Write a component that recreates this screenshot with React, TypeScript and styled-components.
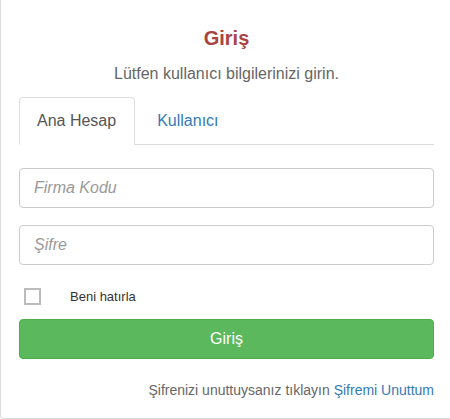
import { useState } from "react"
import styled, { createGlobalStyle } from "styled-components"

const GlobalStyle = createGlobalStyle`
  html, body {
    margin: 0;
    padding: 0;
    background: #fff;
    overflow: hidden;
  }
  body {
    font-family: "Liberation Sans", Arial, sans-serif;
    color: #333;
  }
`

const Panel = styled.div`
  box-sizing: border-box;
  width: 453px;
  height: 419px;
  border: 1px solid #ddd;
  border-top: none;
  border-radius: 0 0 4px 4px;
  padding: 26px 18px 0 18px;
  background: #fff;
`

const Title = styled.h3`
  margin: 0;
  font-size: 20px;
  line-height: 24px;
  font-weight: 700;
  color: #a94442;
  text-align: center;
`

const Lead = styled.p`
  margin: 13px 0 0;
  font-size: 16px;
  line-height: 22px;
  color: #666;
  text-align: center;
`

const Tabs = styled.ul`
  display: flex;
  margin: 12px 0 0;
  padding: 0;
  list-style: none;
  border-bottom: 1px solid #ddd;
`

const Tab = styled.li<{ $active?: boolean }>`
  margin: 0 4px ${p => (p.$active ? "-1px" : "0")} 0;
  padding: 12px 18px 12px 17px;
  font-size: 16px;
  line-height: 22px;
  border: 1px solid ${p => (p.$active ? "#ddd" : "transparent")};
  border-bottom: ${p => (p.$active ? "1px solid #fff" : "none")};
  border-radius: 4px 4px 0 0;
  background: ${p => (p.$active ? "#fff" : "transparent")};
  color: ${p => (p.$active ? "#555" : "#337ab7")};
  cursor: pointer;
`

const Form = styled.form`
  display: flex;
  flex-direction: column;
  margin-top: 23px;
`

const Input = styled.input<{ $gap?: number }>`
  box-sizing: border-box;
  height: 40px;
  margin-top: ${p => p.$gap ?? 0}px;
  padding: 0 14px;
  border: 1px solid #ccc;
  border-radius: 4px;
  font-family: "Liberation Sans", Arial, sans-serif;
  font-size: 16px;
  color: #555;
  outline: none;
  &::placeholder {
    color: #999;
    font-style: italic;
  }
`

const Remember = styled.label`
  display: flex;
  align-items: center;
  height: 20px;
  margin-top: 21px;
  padding-left: 5px;
  font-size: 13px;
  color: #333;
  cursor: pointer;
`

const Box = styled.span<{ $checked: boolean }>`
  box-sizing: border-box;
  width: 17px;
  height: 17px;
  margin-right: 29px;
  border: 2px solid #bbb;
  background: #fff;
  display: flex;
  align-items: center;
  justify-content: center;
  color: #555;
  font-size: 12px;
`

const Submit = styled.button`
  box-sizing: border-box;
  height: 40px;
  margin-top: 13px;
  border: 1px solid #4cae4c;
  border-radius: 4px;
  background: #5cb85c;
  color: #fff;
  font-family: "Liberation Sans", Arial, sans-serif;
  font-size: 16px;
  cursor: pointer;
`

const Footer = styled.p`
  margin: 21px 0 0;
  font-size: 14px;
  line-height: 20px;
  color: #666;
  text-align: right;
`

const Link = styled.a`
  color: #337ab7;
  text-decoration: none;
`

export default function App() {
  const [tab, setTab] = useState(0)
  const [remember, setRemember] = useState(false)

  return (
    <>
      <GlobalStyle />
      <Panel>
        <Title>Giriş</Title>
        <Lead>Lütfen kullanıcı bilgilerinizi girin.</Lead>
        <Tabs>
          <Tab $active={tab === 0} onClick={() => setTab(0)}>Ana Hesap</Tab>
          <Tab $active={tab === 1} onClick={() => setTab(1)}>Kullanıcı</Tab>
        </Tabs>
        <Form onSubmit={e => e.preventDefault()}>
          <Input placeholder="Firma Kodu" />
          <Input type="password" placeholder="Şifre" $gap={17} />
          <Remember onClick={() => setRemember(!remember)}>
            <Box $checked={remember}>{remember ? "✓" : ""}</Box>
            Beni hatırla
          </Remember>
          <Submit type="submit">Giriş</Submit>
        </Form>
        <Footer>
          Şifrenizi unuttuysanız tıklayın <Link href="#">Şifremi Unuttum</Link>
        </Footer>
      </Panel>
    </>
  )
}
